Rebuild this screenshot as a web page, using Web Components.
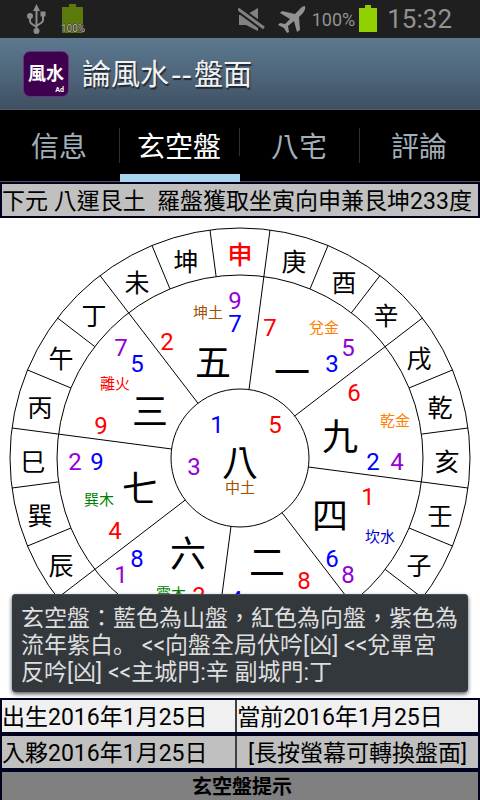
<!DOCTYPE html>
<html lang="zh-Hant">
<head>
<meta charset="utf-8">
<meta name="viewport" content="width=device-width, initial-scale=1">
<title>論風水--盤面</title>
<style>
  html, body { height: 100%; margin: 0; }
  body {
    display: flex; flex-direction: column; overflow: hidden; background: #fff; color: #000;
    font-family: Roboto, "Noto Sans CJK TC", sans-serif; font-size: 23px;
    --navy: #00001f;
  }
  .dot { font-family: "Noto Sans CJK JP", sans-serif; line-height: 1; }
</style>
</head>
<body>
<status-bar></status-bar>
<app-bar><span slot="lead">論風水</span><span slot="mark">--</span><span slot="tail">盤面</span></app-bar>
<tab-bar>
  <tab-item>信息</tab-item>
  <tab-item selected>玄空盤</tab-item>
  <tab-item>八宅</tab-item>
  <tab-item>評論</tab-item>
</tab-bar>
<info-row tone="silver">下元 八運艮土  羅盤獲取坐寅向申兼艮坤233度</info-row>
<compass-stage>
  <luo-pan></luo-pan>
  <toast-note slot="toast">玄空盤：藍色為山盤，紅色為向盤，紫色為流年紫白<span class="dot" lang="ja">。</span> &lt;&lt;向盤全局伏吟[凶] &lt;&lt;兌單宮反吟[凶] &lt;&lt;主城門:辛 副城門:丁</toast-note>
</compass-stage>
<info-row tone="light">出生2016年1月25日<span slot="second">當前2016年1月25日</span></info-row>
<info-row tone="silver" centered>入夥2016年1月25日<span slot="second">[長按螢幕可轉換盤面]</span></info-row>
<hint-button>玄空盤提示</hint-button>

<script>
const define = (name, html, setup) => {
  const template = document.createElement('template');
  template.innerHTML = html;
  customElements.define(name, class extends HTMLElement {
    constructor() {
      super();
      this.attachShadow({ mode: 'open' }).append(template.content.cloneNode(true));
    }
    connectedCallback() { if (setup) setup(this, this.shadowRoot); }
  });
};

define('status-bar', `
<style>
  :host { display: flex; align-items: center; justify-content: space-between; flex: none; height: 38px;
    padding: 0 28px 0 26px; box-sizing: border-box; background: #1f1f1f; color: #929292; }
  .group { display: flex; align-items: center; }
  .left { gap: 12px; }
  svg { display: block; }
  .plane { margin-left: 12px; }
  .charge { font-size: 18px; margin: 0 4px 0 5px; }
  .clock { font-size: 26px; margin-left: 10px; }
</style>
<div class="group left">
  <svg width="21" height="32" viewBox="0 0 21 32" fill="none" stroke="#8c8c8c" stroke-width="2">
    <path d="M10.500 6V28M4 13V18Q4 20 6 21L10.500 24M17 12V17Q17 19 15 20L10.500 23"/>
    <path d="M10.500 1L14 8H7ZM14.500 8.500H19.500V13.500H14.500Z" fill="#8c8c8c" stroke="none"/>
    <circle cx="4" cy="13" r="3" fill="#8c8c8c" stroke="none"/><circle cx="10.500" cy="28" r="3" fill="#8c8c8c" stroke="none"/>
  </svg>
  <svg width="28" height="32" viewBox="0 0 28 32">
    <path d="M10 1H17V4H24V30H3V4H10Z" fill="#5c7a0c"/>
    <text x="14" y="29" text-anchor="middle" font-size="10" fill="#b4b4a4" stroke="#333" stroke-width="1" paint-order="stroke">100%</text>
  </svg>
</div>
<div class="group">
  <svg width="27" height="28" viewBox="0 0 27 28">
    <path d="M1 10H8L20 3V26L8 20H1Z" fill="#828282"/>
    <path d="M0 4L26 23" stroke="#1f1f1f" stroke-width="7"/>
    <path d="M0 4L26 23" stroke="#828282" stroke-width="3"/>
  </svg>
  <svg class="plane" width="30" height="28" viewBox="0 -1 30 28">
    <path d="M28 0Q25 0 22 4L18 8L5 5L3 7L13 13L8 18L3 17L1 19L7 22L10 27L12 26L11 20L17 15L20 26L23 24L22 11L26 7Q29 3 28 0Z" fill="#929292"/>
  </svg>
  <span class="charge">100%</span>
  <svg width="18" height="28" viewBox="0 0 18 28"><path d="M6 0H12V3H18V27H0V3H6Z" fill="#91d000"/></svg>
  <span class="clock">15:32</span>
</div>`);

define('app-bar', `
<style>
  :host { display: flex; align-items: center; flex: none; height: 72px; box-sizing: border-box; padding-left: 23px;
    background: linear-gradient(#5b7990, #4d6277 60%, #3e4f61); border-bottom: 1px solid #53616f;
    color: #f2f2f2; font-size: 29px; text-shadow: 1px 2px 1px #1c2733; }
  .logo { display: grid; position: relative; place-items: center; width: 46px; height: 46px; box-sizing: border-box;
    border: 1px solid #6a3379; border-radius: 7px; background: #3f0050; text-shadow: none; color: #fff;
    font-size: 18px; font-weight: 700; line-height: 24px; }
  .ad { position: absolute; right: 4px; bottom: 2px; font-size: 7px; line-height: 8px; }
  h1 { display: flex; align-items: baseline; margin: 2px 0 0 13px; font: inherit; line-height: 40px; }
  .mark { padding: 0 2px; font-family: "DejaVu Sans", sans-serif; }
</style>
<div class="logo">風水<span class="ad">Ad</span></div>
<h1><slot name="lead"></slot><span class="mark"><slot name="mark"></slot></span><slot name="tail"></slot></h1>`);

define('tab-bar', `
<style>
  :host { display: flex; flex: none; height: 72px; background: #000; }
</style>
<slot></slot>`);

define('tab-item', `
<style>
  :host { display: flex; flex: 1; position: relative; border-bottom: 1px solid #53535e; }
  :host(:not(:last-child))::after { content: ""; position: absolute; right: 0; top: 18px; bottom: 18px; width: 1px; background: #303030; }
  button { flex: 1; border: 0; padding: 0 2px 2px 0; background: none; color: #a3afb8; font: inherit; font-size: 28px; }
  :host([selected]) { border-bottom: 8px solid #a9d5ef; }
  :host([selected]) button { color: #fff; padding: 5px 2px 0 0; }
</style>
<button type="button"><slot></slot></button>`);

define('info-row', `
<style>
  :host { display: flex; flex: none; height: 36px; box-sizing: border-box; border: 2px solid var(--navy);
    line-height: 32px; white-space: pre; background: #c0c0c0; }
  :host([tone="light"]) { background: #f0f0f0; }
  div { flex: 1 1 0; height: 32px; box-sizing: border-box; padding-top: 2px; }
  .second { display: none; border-left: 2px solid #404040; }
  :host(.pair) .second { display: block; flex: 0 0 51%; }
  :host([centered]) .second { text-align: center; }
</style>
<div><slot></slot></div><div class="second"><slot name="second"></slot></div>`,
(host) => host.classList.toggle('pair', !!host.querySelector('[slot="second"]')));

define('compass-stage', `
<style>
  :host { display: flex; flex: 1 1 0; min-height: 0; position: relative; background: #fff; }
  ::slotted([slot="toast"]) { position: absolute; left: 12px; right: 12px; bottom: 6px; }
</style>
<slot></slot><slot name="toast"></slot>`);

define('toast-note', `
<style>
  :host { display: block; padding: 11px 9px 6px 9px; border-radius: 4px; background: #33383c; color: #dedede;
    line-height: 27px; box-shadow: 0 2px 4px #000a, inset 0 1px #4a4e52; }
</style>
<slot></slot>`);

define('hint-button', `
<style>
  :host { display: flex; flex: none; height: 30px; box-sizing: border-box; border: 2px solid var(--navy); border-bottom: 0; }
  button { flex: 1; border: 0; padding: 2px 0 0 4px; background: #808080; color: #000; font: inherit; font-size: 20px; font-weight: 700; line-height: 26px; }
</style>
<button type="button"><slot></slot></button>`);

define('luo-pan', `
<style>
  :host { display: flex; flex: 1; min-width: 0; }
  svg { width: 100%; height: 100%; }
  text { text-anchor: middle; }
  .line { fill: none; stroke: #000; stroke-width: 1; }
  .mountain { font-size: 25px; }
  .facing { font-weight: 500; }
  .palace { font-size: 36px; }
  .star { font-size: 24px; }
  .element { font-size: 15px; }
</style>
<svg viewBox="0 218 480 480" role="img" aria-label="玄空盤"></svg>`, (host, root) => {
  const cx = 240, cy = 458, svg = root.querySelector('svg');
  const point = (deg, r) => {
    const a = deg * Math.PI / 180;
    return [cx + r * Math.sin(a), cy - r * Math.cos(a)];
  };
  const parts = [69, 183, 230].map(r => `<circle class="line" cx="${cx}" cy="${cy}" r="${r}"/>`);
  const text = (kind, s, x, y, fill = '#000') =>
    parts.push(`<text class="${kind}" x="${x}" y="${y}" fill="${fill}">${s}</text>`);

  // 24 dividers; every third one reaches the centre disc
  for (let i = 0; i < 24; i++) {
    const [x1, y1] = point(i * 15 + 7.5, i % 3 ? 183 : 69);
    const [x2, y2] = point(i * 15 + 7.5, 230);
    parts.push(`<path class="line" d="M${x1} ${y1}L${x2} ${y2}"/>`);
  }
  // mountains clockwise from 辰, counted in steps of 15 degrees from the top
  [...'辰巽巳丙午丁未坤申庚酉辛戌乾亥壬子'].forEach((name, i) => {
    const [x, y] = point((i - 8) * 15, 207);
    text(i === 8 ? 'mountain facing' : 'mountain', name, Math.round(x), Math.round(y) + 13, i === 8 ? '#f00' : '#000');
  });

  const red = '#f00', blue = '#00f', purple = '#9400d3', orange = '#ff8000', brown = '#a05000', green = '#008000';
  [['五', 213, 376], ['一', 292, 386], ['九', 340, 450], ['四', 330, 529], ['二', 267, 576],
   ['六', 188, 567], ['七', 140, 502], ['三', 150, 425], ['八', 240, 476]].forEach(p => text('palace', ...p));
  [['坤土', 208, 318, brown], ['兌金', 324, 333, orange], ['乾金', 395, 426, orange], ['坎水', 380, 542, '#0000c8'],
   ['震木', 171, 599, green], ['巽木', 99, 505, green], ['離火', 115, 389, red],
   ['中土', 240, 493, brown]].forEach(p => text('element', ...p));
  [[9, 235, 309, purple], [7, 235, 332, blue], [2, 167, 350, red],
   [7, 270, 336, red], [5, 348, 356, purple], [3, 332, 372, blue],
   [6, 354, 401, red], [2, 373, 470, blue], [4, 397, 470, purple],
   [1, 368, 505, red], [6, 332, 567, blue], [8, 348, 583, purple],
   [8, 304, 589, red], [4, 236, 608, blue],
   [3, 199, 604, red], [8, 137, 567, blue], [1, 121, 583, purple],
   [4, 115, 539, red], [9, 97, 470, blue], [2, 75, 470, purple],
   [9, 101, 434, red], [5, 137, 372, blue], [7, 121, 356, purple],
   [1, 217, 433, blue], [5, 275, 433, red], [3, 194, 475, purple]].forEach(p => text('star', ...p));
  svg.innerHTML = parts.join('');
});
</script>
</body>
</html>
